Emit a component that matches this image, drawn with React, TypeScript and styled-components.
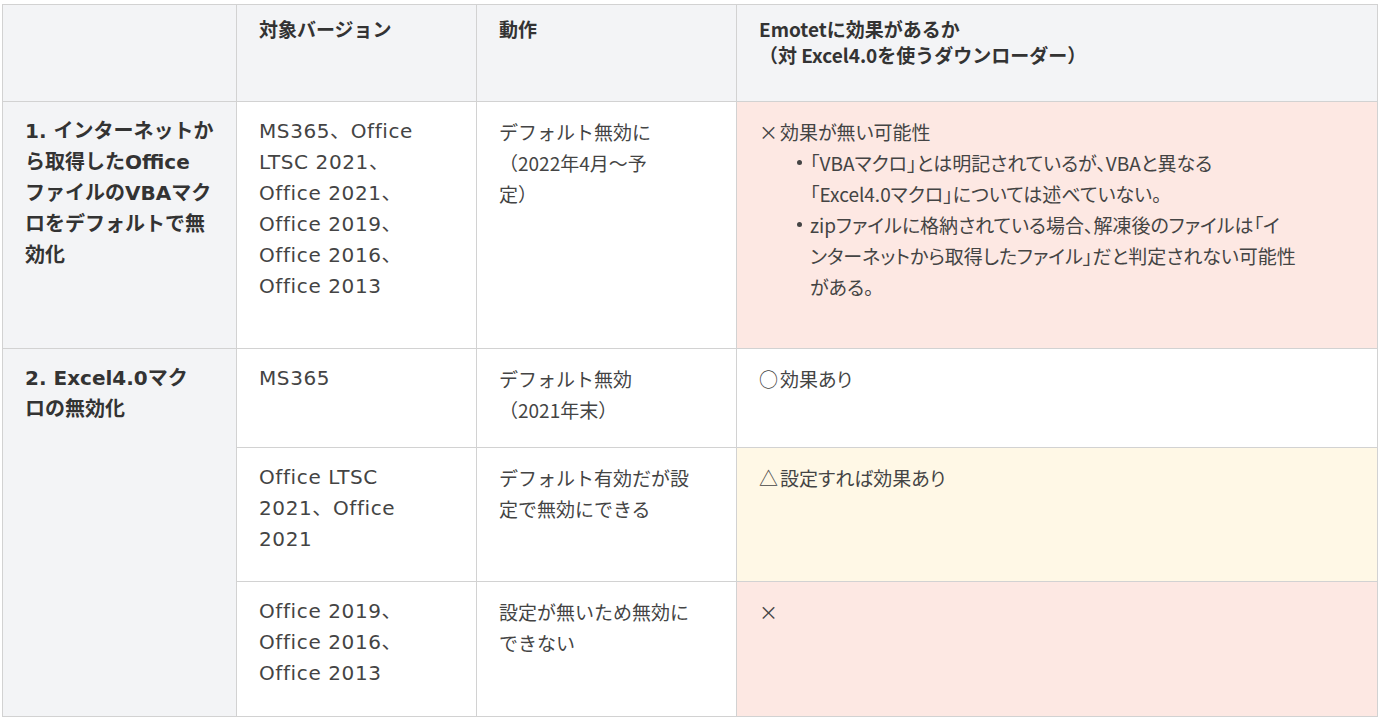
import React from 'react'
import styled, { createGlobalStyle, css } from 'styled-components'

const GlobalStyle = createGlobalStyle`
   body {
      margin: 0;
      background: #ffffff;
      font-family: "Noto Sans CJK JP", "Noto Sans", sans-serif;
      color: #333333;
   }
`

// Meiryo-like: Verdana-ish latin with full-width kana
const wideFont = css`
   font-family: "DejaVu Sans", "Noto Sans CJK JP", sans-serif;
   font-size: 20px;
`

// Meiryo UI-like: narrow latin and proportional kana
const uiFont = css`
   font-family: "Noto Sans CJK JP", "Noto Sans", sans-serif;
   font-size: 19px;
`

const Page = styled.div`
   padding: 4px 4px 0 2px;
`

const Table = styled.table`
   width: 1375px;
   border-collapse: collapse;
   table-layout: fixed;
   line-height: 31px;
`

const Row = styled.tr<{ $h: number }>`
   height: ${(p) => p.$h}px;
`

const HeadCell = styled.th`
   ${uiFont}
   background: #f3f4f6;
   border: 1px solid #d2d2d2;
   text-align: left;
   vertical-align: top;
   font-weight: 700;
   line-height: 26px;
   color: #333333;
   padding: 11px 20px 0 22px;
`

type Tone = 'label' | 'bad' | 'warn' | 'good'

const toneBg: Record<Tone, string> = {
   label: '#f3f4f6',
   bad: '#fde8e3',
   warn: '#fff8e6',
   good: '#ffffff',
}

const Cell = styled.td<{ $tone?: Tone; $wide?: boolean; $palt?: boolean }>`
   ${(p) => (p.$wide ? wideFont : uiFont)}
   ${(p) => p.$palt && "font-feature-settings: 'palt';"}
   border: 1px solid #d2d2d2;
   vertical-align: top;
   white-space: nowrap;
   padding: 14px 16px 0 22px;
   color: #444444;
   background: ${(p) => toneBg[p.$tone ?? 'good']};
   ${(p) =>
      p.$tone === 'label' &&
      css`
         font-weight: 700;
         color: #333333;
      `}
`

const Versions = styled(Cell)`
   letter-spacing: 0.6px;
`

const Mark = styled.span`
   display: inline-block;
   width: 21px;
`

const Bullets = styled.ul`
   margin: 0;
   padding-left: 38px;
   list-style: none;
`

const Bullet = styled.li`
   position: relative;
   padding-left: 13px;
   &::before {
      content: '';
      position: absolute;
      left: 0;
      top: 13px;
      width: 5px;
      height: 5px;
      border-radius: 50%;
      background: #444444;
   }
`

export default function App() {
   return (
      <Page>
         <GlobalStyle />
         <Table>
            <colgroup>
               <col style={{ width: 234 }} />
               <col style={{ width: 240 }} />
               <col style={{ width: 260 }} />
               <col style={{ width: 641 }} />
            </colgroup>
            <thead>
               <Row $h={97}>
                  <HeadCell />
                  <HeadCell>対象バージョン</HeadCell>
                  <HeadCell>動作</HeadCell>
                  <HeadCell>
                     Emotetに効果があるか
                     <br />
                     （対 Excel4.0を使うダウンローダー）
                  </HeadCell>
               </Row>
            </thead>
            <tbody>
               <Row $h={247}>
                  <Cell $tone="label" $wide>
                     1. インターネットか
                     <br />
                     ら取得したOffice
                     <br />
                     ファイルのVBAマク
                     <br />
                     ロをデフォルトで無
                     <br />
                     効化
                  </Cell>
                  <Versions $wide>
                     MS365、Office
                     <br />
                     LTSC 2021、
                     <br />
                     Office 2021、
                     <br />
                     Office 2019、
                     <br />
                     Office 2016、
                     <br />
                     Office 2013
                  </Versions>
                  <Cell>
                     デフォルト無効に
                     <br />
                     （2022年4月～予
                     <br />
                     定）
                  </Cell>
                  <Cell $tone="bad" $palt>
                     <Mark>×</Mark>効果が無い可能性
                     <Bullets>
                        <Bullet>
                           「VBAマクロ」とは明記されているが、VBAと異なる
                           <br />
                           「Excel4.0マクロ」については述べていない。
                        </Bullet>
                        <Bullet>
                           zipファイルに格納されている場合、解凍後のファイルは「イ
                           <br />
                           ンターネットから取得したファイル」だと判定されない可能性
                           <br />
                           がある。
                        </Bullet>
                     </Bullets>
                  </Cell>
               </Row>
               <Row $h={99}>
                  <Cell $tone="label" $wide rowSpan={3}>
                     2. Excel4.0マク
                     <br />
                     ロの無効化
                  </Cell>
                  <Versions $wide>MS365</Versions>
                  <Cell>
                     デフォルト無効
                     <br />
                     （2021年末）
                  </Cell>
                  <Cell $tone="good" $palt>
                     <Mark>○</Mark>効果あり
                  </Cell>
               </Row>
               <Row $h={134}>
                  <Versions $wide>
                     Office LTSC
                     <br />
                     2021、Office
                     <br />
                     2021
                  </Versions>
                  <Cell>
                     デフォルト有効だが設
                     <br />
                     定で無効にできる
                  </Cell>
                  <Cell $tone="warn" $palt>
                     <Mark>△</Mark>設定すれば効果あり
                  </Cell>
               </Row>
               <Row $h={135}>
                  <Versions $wide>
                     Office 2019、
                     <br />
                     Office 2016、
                     <br />
                     Office 2013
                  </Versions>
                  <Cell>
                     設定が無いため無効に
                     <br />
                     できない
                  </Cell>
                  <Cell $tone="bad" $palt>
                     ×
                  </Cell>
               </Row>
            </tbody>
         </Table>
      </Page>
   )
}
